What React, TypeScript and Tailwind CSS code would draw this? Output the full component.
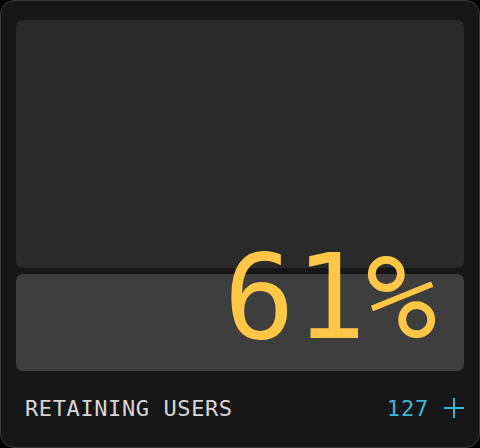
import React from "react";

const mono = { fontFamily: '"DejaVu Sans Mono", "Liberation Mono", monospace' };

function PlusIcon() {
  return (
    <svg width="20" height="20" viewBox="0 0 20 20" fill="none" stroke="currentColor" strokeWidth="2">
      <path d="M10 0v20M0 10h20" />
    </svg>
  );
}

export default function App() {
  return (
    <div className="w-[480px] h-[448px] bg-black">
      <div className="flex h-full w-full flex-col rounded-[14px] border border-[#3a3a3a] bg-[#171717] px-[15px] pt-[19px]">
        <div className="relative flex flex-col gap-[6px]">
          <div className="h-[248px] rounded-[7px] bg-[#2a2a2a]" />
          <div className="h-[97px] rounded-[7px] bg-[#3e3e3e]" />
          <span
            className="absolute right-[27px] bottom-[15px] text-[118px] leading-none text-[#ffc745]"
            style={mono}
          >
            61%
          </span>
        </div>
        <div className="flex flex-1 items-center justify-between pl-[9px] pb-[2px]">
          <span className="text-[22px] tracking-[0.6px] text-[#d6d6d6]" style={mono}>
            RETAINING USERS
          </span>
          <div className="flex items-center gap-[15px] text-[#3cb6d3]">
            <span className="text-[22px] tracking-[0.8px]" style={mono}>127</span>
            <PlusIcon />
          </div>
        </div>
      </div>
    </div>
  );
}
